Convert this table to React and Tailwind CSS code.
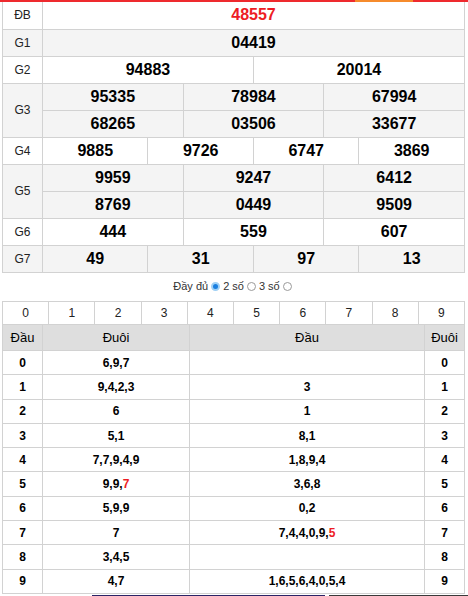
const prizes = [
  { label: "ĐB", rows: [["48557"]], red: true },
  { label: "G1", rows: [["04419"]] },
  { label: "G2", rows: [["94883", "20014"]] },
  { label: "G3", rows: [["95335", "78984", "67994"], ["68265", "03506", "33677"]] },
  { label: "G4", rows: [["9885", "9726", "6747", "3869"]] },
  { label: "G5", rows: [["9959", "9247", "6412"], ["8769", "0449", "9509"]] },
  { label: "G6", rows: [["444", "559", "607"]] },
  { label: "G7", rows: [["49", "31", "97", "13"]] },
];

const loto = [
  { n: 0, duoi: "6,9,7", dau: "" },
  { n: 1, duoi: "9,4,2,3", dau: "3" },
  { n: 2, duoi: "6", dau: "1" },
  { n: 3, duoi: "5,1", dau: "8,1" },
  { n: 4, duoi: "7,7,9,4,9", dau: "1,8,9,4" },
  { n: 5, duoi: "9,9,", duoiRed: "7", dau: "3,6,8" },
  { n: 6, duoi: "5,9,9", dau: "0,2" },
  { n: 7, duoi: "7", dau: "7,4,4,0,9,", dauRed: "5" },
  { n: 8, duoi: "3,4,5", dau: "" },
  { n: 9, duoi: "4,7", dau: "1,6,5,6,4,0,5,4" },
];

const Radio = ({ checked }) => (
  <span
    className={
      checked
        ? "inline-block w-[9px] h-[9px] rounded-full border-[2px] border-[#9fd0f5] bg-[#1a7fe0] mx-[3px]"
        : "inline-block w-[9px] h-[9px] rounded-full border border-[#9a9a9a] bg-white mx-[3px]"
    }
  />
);

const App = () => {
  return (
    <div className="w-[468px] h-[596px] bg-white overflow-hidden font-['Liberation_Sans',Arial,sans-serif]">
      <div className="flex h-[2px]">
        <div className="w-[355px] bg-[#ee2a2e]" />
        <div className="w-[58px] bg-[#f68b2c]" />
        <div className="flex-1 bg-[#ee2a2e]" />
      </div>

      <table className="ml-[2px] w-[463px] table-fixed border-collapse">
        <colgroup>
          <col className="w-[40px]" />
          {Array.from({ length: 12 }).map((_, i) => (
            <col key={i} />
          ))}
        </colgroup>
        <tbody>
          {prizes.map((p, pi) =>
            p.rows.map((row, ri) => (
              <tr key={p.label + ri} className={pi % 2 ? "h-[27px] bg-[#f4f4f4]" : "h-[27px] bg-white"}>
                {ri === 0 && (
                  <td
                    rowSpan={p.rows.length}
                    className="border border-[#d2d2d2] border-t-0 text-center text-[12px] text-[#222] p-0"
                  >
                    {p.label}
                  </td>
                )}
                {row.map((num) => (
                  <td
                    key={num}
                    colSpan={12 / row.length}
                    className={
                      p.red
                        ? "border border-[#d2d2d2] border-t-0 text-center text-[16px] font-bold text-[#ed1c24] p-0"
                        : "border border-[#d2d2d2] text-center text-[16px] font-bold text-black p-0"
                    }
                  >
                    {num}
                  </td>
                ))}
              </tr>
            ))
          )}
        </tbody>
      </table>

      <div className="h-[28px] flex items-center justify-center text-[11px] text-[#333]">
        Đầy đủ <Radio checked /> 2 số <Radio /> 3 số <Radio />
      </div>

      <table className="ml-[2px] w-[463px] table-fixed border-collapse">
        <tbody>
          <tr className="h-[23px]">
            {Array.from({ length: 10 }).map((_, i) => (
              <td key={i} className="border border-[#d2d2d2] text-center text-[12px] text-[#222] p-0">
                {i}
              </td>
            ))}
          </tr>
        </tbody>
      </table>

      <table className="ml-[2px] w-[463px] table-fixed border-collapse">
        <colgroup>
          <col className="w-[40px]" />
          <col className="w-[147px]" />
          <col className="w-[235px]" />
          <col className="w-[40px]" />
        </colgroup>
        <tbody>
          <tr className="h-[26px] bg-[#dedede] text-[13px] text-black">
            <td className="border border-t-0 border-[#d2d2d2] text-center p-0">Đầu</td>
            <td className="border border-t-0 border-[#d2d2d2] text-center p-0">Đuôi</td>
            <td className="border border-t-0 border-[#d2d2d2] text-center p-0">Đầu</td>
            <td className="border border-t-0 border-[#d2d2d2] text-center p-0">Đuôi</td>
          </tr>
          {loto.map((r) => (
            <tr key={r.n} className="h-[24.3px] text-[12px] font-bold text-black">
              <td className="border border-[#d2d2d2] text-center p-0">{r.n}</td>
              <td className="border border-[#d2d2d2] text-center p-0">
                {r.duoi}
                {r.duoiRed && <span className="text-[#ed1c24]">{r.duoiRed}</span>}
              </td>
              <td className="border border-[#d2d2d2] text-center p-0">
                {r.dau}
                {r.dauRed && <span className="text-[#ed1c24]">{r.dauRed}</span>}
              </td>
              <td className="border border-[#d2d2d2] text-center p-0">{r.n}</td>
            </tr>
          ))}
        </tbody>
      </table>

      <div className="flex h-[3px] mt-[1px]">
        <div className="w-[92px]" />
        <div className="w-[233px] bg-[#2b2466]" />
        <div className="w-[4px]" />
        <div className="flex-1 bg-[#3a3a3a]" />
      </div>
    </div>
  );
};

export default App;
